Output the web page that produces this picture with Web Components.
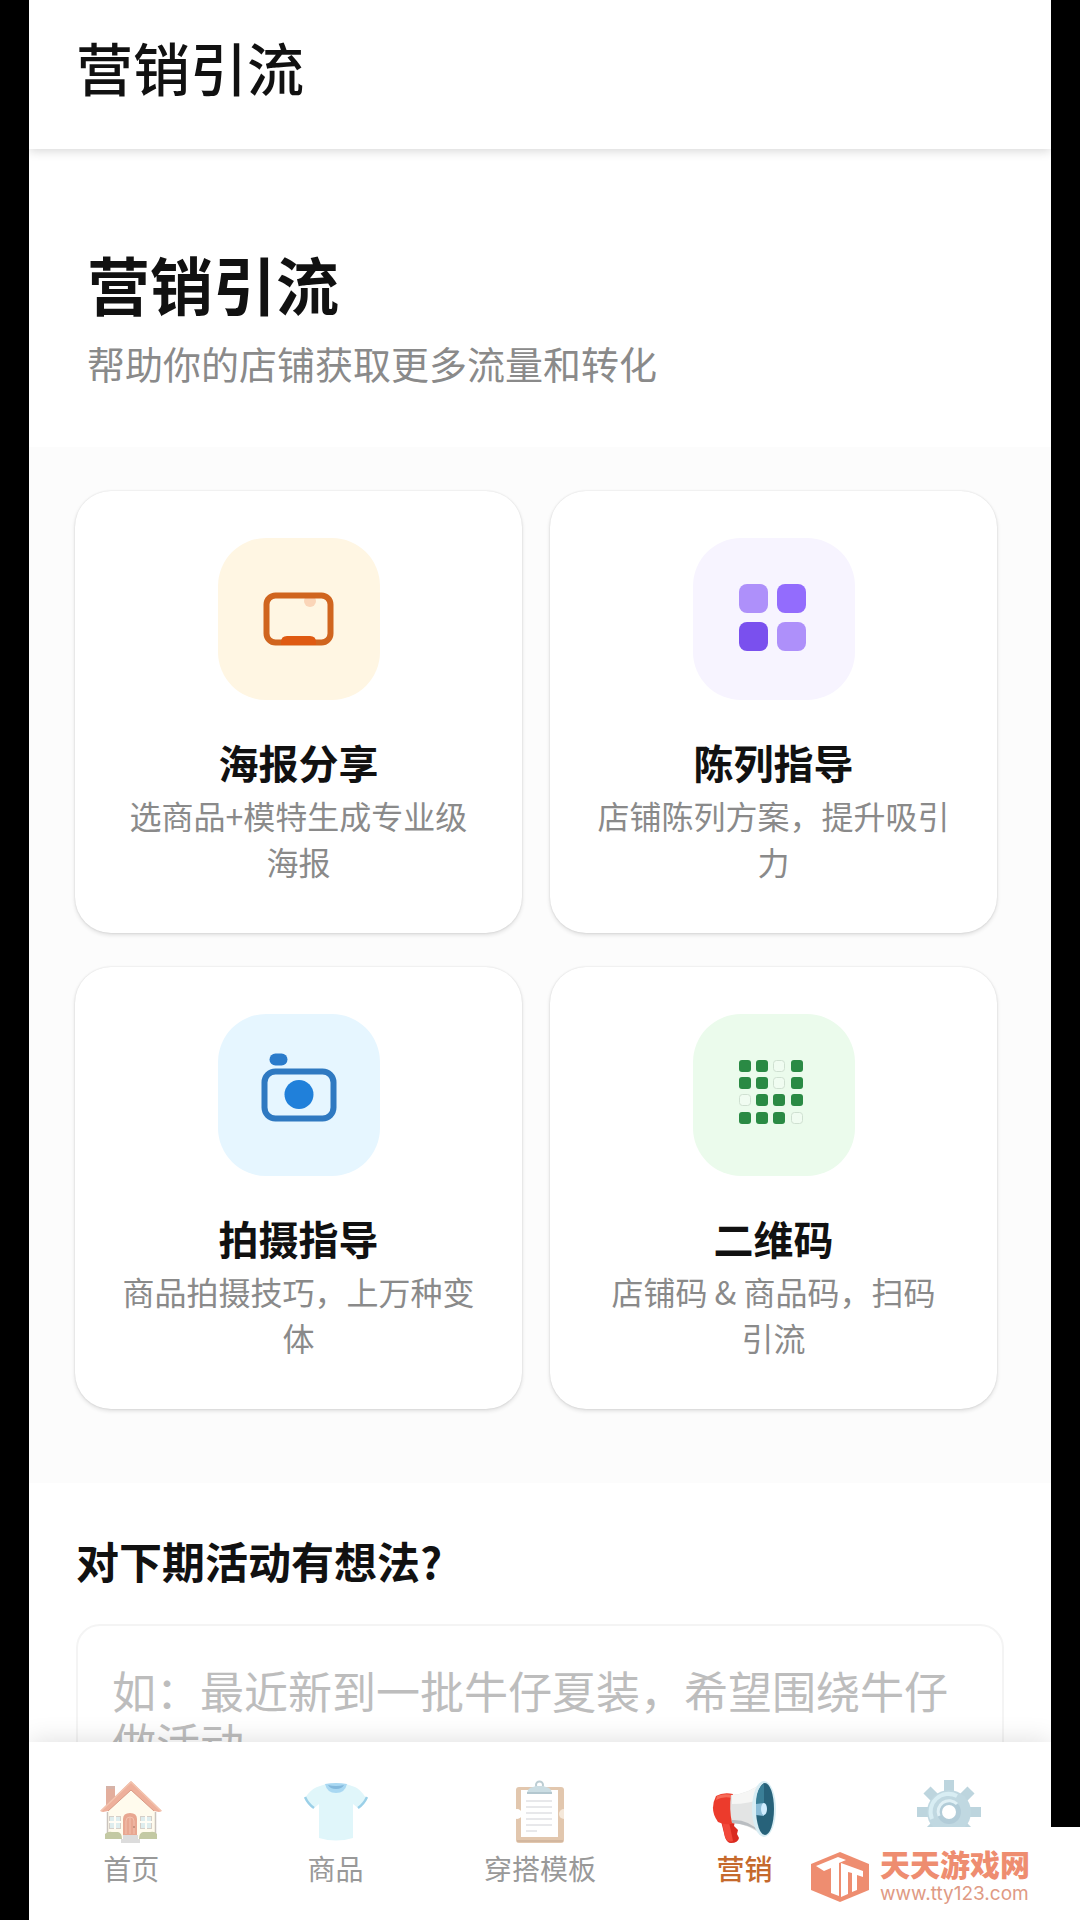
<!DOCTYPE html>
<html lang="zh-CN">
<head>
<meta charset="utf-8">
<meta name="viewport" content="width=device-width, initial-scale=1">
<title>营销引流</title>
<style>
    body {
        margin: 0;
        background: #000;
        font-family: "Noto Sans CJK SC", sans-serif;
        color: #111;
    }
</style>
</head>
<body>
<marketing-app>
    <app-header slot="header">营销引流</app-header>

    <page-hero>
        营销引流
        <span slot="subtitle">帮助你的店铺获取更多流量和转化</span>
    </page-hero>

    <feature-grid>
        <feature-card style="--tile: #fff6e3">
            <svg slot="icon" viewBox="0 0 162 162">
                <circle cx="92" cy="63" r="6" fill="#fbd5b8"/>
                <rect x="48.500" y="57.500" width="64" height="47" rx="9" fill="none" stroke="#d0651f" stroke-width="6"/>
                <path d="M63 107v-3q0-6 6-6h23q6 0 6 6v3z" fill="#df5a12"/>
            </svg>
            海报分享
            <span slot="text">选商品+模特生成专业级海报</span>
        </feature-card>
        <feature-card style="--tile: #f7f4ff">
            <svg slot="icon" viewBox="0 0 162 162">
                <rect x="46" y="46" width="29" height="29" rx="8" fill="#ae90fa"/>
                <rect x="84" y="46" width="29" height="29" rx="8" fill="#936cfd"/>
                <rect x="46" y="84" width="29" height="29" rx="8" fill="#7a50ee"/>
                <rect x="84" y="84" width="29" height="29" rx="8" fill="#ae90fa"/>
            </svg>
            陈列指导
            <span slot="text">店铺陈列方案，提升吸引力</span>
        </feature-card>
        <feature-card style="--tile: #e6f6ff">
            <svg slot="icon" viewBox="0 0 162 162">
                <rect x="51.500" y="39.500" width="18" height="12" rx="6" fill="#2a7bcb"/>
                <rect x="46.500" y="57.500" width="69" height="47" rx="11" fill="none" stroke="#2f79c1" stroke-width="6"/>
                <circle cx="81" cy="80.500" r="14.500" fill="#2080da"/>
            </svg>
            拍摄指导
            <span slot="text">商品拍摄技巧，上万种变体</span>
        </feature-card>
        <feature-card style="--tile: #ebfbec">
            <svg slot="icon" viewBox="0 0 162 162">
                <g fill="#2a8a44">
                    <rect x="46" y="46" width="12" height="12" rx="3"/>
                    <rect x="63" y="46" width="12" height="12" rx="3"/>
                    <rect x="98" y="46" width="12" height="12" rx="3"/>
                    <rect x="46" y="63" width="12" height="12" rx="3"/>
                    <rect x="63" y="63" width="12" height="12" rx="3"/>
                    <rect x="98" y="63" width="12" height="12" rx="3"/>
                    <rect x="63" y="80" width="12" height="12" rx="3"/>
                    <rect x="80" y="80" width="12" height="12" rx="3"/>
                    <rect x="98" y="80" width="12" height="12" rx="3"/>
                    <rect x="46" y="98" width="12" height="12" rx="3"/>
                    <rect x="63" y="98" width="12" height="12" rx="3"/>
                    <rect x="80" y="98" width="12" height="12" rx="3"/>
                </g>
                <g fill="#f0fcf1" stroke="#cfe0d1">
                    <rect x="80.500" y="46.500" width="11" height="11" rx="3"/>
                    <rect x="80.500" y="63.500" width="11" height="11" rx="3"/>
                    <rect x="46.500" y="80.500" width="11" height="11" rx="3"/>
                    <rect x="98.500" y="98.500" width="11" height="11" rx="3"/>
                </g>
            </svg>
            二维码
            <span slot="text">店铺码 &amp; 商品码，扫码引流</span>
        </feature-card>
    </feature-grid>

    <idea-form placeholder="如：最近新到一批牛仔夏装，希望围绕牛仔做活动">对下期活动有想法?</idea-form>

    <tab-bar slot="tabs">
        <tab-item>
            <svg slot="icon" viewBox="0 0 64 64">
                <path d="M7 6h9v14l-9 8z" fill="#e3ae9d"/>
                <path d="M7 6h9v3H7z" fill="#d6b3a8"/>
                <path d="M9 29L32 8l24 21v29H9z" fill="#fffbed"/>
                <path d="M8.500 32v26M56.500 32v26" stroke="#c9c3bd" stroke-width="1.500"/>
                <path d="M32 1L1 31l3 1 5-1 23-21 23 21 5 1 3-1z" fill="#eeb09b"/>
                <path d="M9 31l23-21 23 21" fill="none" stroke="#d99a86" stroke-width="1"/>
                <path d="M32 2L2 31M32 2l30 29" stroke="#f3c3ae" stroke-width="1.500"/>
                <path d="M24 55V39q0-6 7-6t7 6v16z" fill="#e8a791"/>
                <path d="M27 54V41q0-4 4-4t4 4v13M31 37v17" fill="none" stroke="#f2c1ae"/>
                <circle cx="35" cy="47" r="1" fill="#b98874"/>
                <g fill="#deedee" stroke="#d6cfc8">
                    <rect x="10.500" y="36.500" width="11" height="12"/>
                    <rect x="41.500" y="36.500" width="11" height="12"/>
                </g>
                <path d="M16 36v13M10 42h12M47 36v13M41 42h12" stroke="#fffdf6" stroke-width="2"/>
                <path d="M6 59v-5q3-3 7-2h6q4 1 4 7zM40 59q0-6 4-7h7q5-1 7 2v5z" fill="#c3c9a3"/>
                <path d="M24 55h15v4h2v4H22v-4h2z" fill="#dcdcdc"/>
            </svg>
            首页
        </tab-item>
        <tab-item>
            <svg slot="icon" viewBox="0 0 64 64">
                <path d="M22 4q10 5 20 0l9 3q6 3 11 11l-8 10-5-4v34q-17 5-34 0V24l-5 4-9-10Q6 10 13 7z" fill="#e0f6fa"/>
                <path d="M21 4q11-2 22 0-2 9-11 9T21 4z" fill="#a9d8f2"/>
                <path d="M24 5q8 2 16 0-2 4-8 4t-8-4z" fill="#84b9dc"/>
                <path d="M1 17q3 7 9 11M63 17q-3 7-9 11" fill="none" stroke="#9bd0e8" stroke-width="2.500"/>
            </svg>
            商品
        </tab-item>
        <tab-item>
            <svg slot="icon" viewBox="0 0 64 64">
                <rect x="8" y="7" width="48" height="56" rx="3" fill="#e2c7ae"/>
                <path d="M9 61h46" stroke="#d3b79f" stroke-width="2"/>
                <circle cx="9" cy="34" r="5" fill="#fff"/>
                <path d="M56 29a5 5 0 0 0 0 10z" fill="#f5e8da"/>
                <path d="M13 10h37v47H13z" fill="#fff"/>
                <path d="M18 21h26M18 27h26M18 33h26M18 39h26M18 45h26M18 51h11" stroke="#d0d1d6"/>
                <circle cx="31.500" cy="5" r="3.500" fill="#fff" stroke="#bccdd3" stroke-width="2"/>
                <path d="M19 14q0-6 6-7l3-1h7l3 1q6 1 6 7z" fill="#cbdde3"/>
                <path d="M19 13h25" stroke="#b3c7cf" stroke-width="2"/>
            </svg>
            穿搭模板
        </tab-item>
        <tab-item selected>
            <svg slot="icon" viewBox="0 0 64 64">
                <path d="M9 41h14l-1 5 4 4-1 4 2 4q-1 5-8 5-4 0-6-6z" fill="#d92a20"/>
                <path d="M10 42h7l4 19q-6 2-8-4z" fill="#f2483a"/>
                <path d="M4 16q7-4 17-2l2 29q-9 3-17-1-9-12-2-26z" fill="#ec3b2c"/>
                <path d="M5 16q7-3 15-1v3Q11 16 4 20z" fill="#f76b58"/>
                <path d="M19 15Q37 14 52 1v56Q38 44 20 43q-3-14-1-28z" fill="#e3e4e4"/>
                <path d="M20 15Q37 14 52 1v17q-15 6-32 6z" fill="#f6f6f5"/>
                <path d="M20 40q16-1 28 12-12-8-28-9z" fill="#b9bdc1"/>
                <ellipse cx="52" cy="29" rx="12" ry="28" fill="#d8edf4"/>
                <ellipse cx="53" cy="29" rx="9" ry="26" fill="#27627a"/>
                <path d="M52 4q-8 4-8 21h8z" fill="#3a7f97"/>
                <path d="M44 24l8-1v13l-8-1z" fill="#8bbdd8"/>
                <ellipse cx="52" cy="29" rx="3" ry="6" fill="#d1edff"/>
            </svg>
            营销
        </tab-item>
        <tab-item label="设置">
            <svg slot="icon" viewBox="0 0 64 64">
                <g stroke="#bdd5de" stroke-width="10">
                    <path d="M32 0v64M0 32h64"/>
                    <path d="M10 10l44 44M54 10L10 54"/>
                </g>
                <circle cx="32" cy="32" r="22" fill="#c0d8e1"/>
                <path d="M15 39a18 18 0 0 1 25-23" fill="none" stroke="#d8edf3" stroke-width="4"/>
                <circle cx="32" cy="32" r="12" fill="#b2ccd8"/>
                <path d="M22 36a11 11 0 0 1 18-12" fill="none" stroke="#e0f0f5" stroke-width="3"/>
                <circle cx="32" cy="32" r="7" fill="#fff"/>
            </svg>
        </tab-item>
    </tab-bar>
</marketing-app>

<site-mark>
    天天游戏网
    <span slot="url">www.tty123.com</span>
</site-mark>

<script>
function define(name, html, setup) {
    const template = document.createElement("template");
    template.innerHTML = html;

    customElements.define(name, class extends HTMLElement {
        constructor() {
            super();
            this.attachShadow({ mode: "open" });
            this.shadowRoot.appendChild(template.content.cloneNode(true));
            if (setup) {
                setup(this, this.shadowRoot);
            }
        }
    });
}

define("marketing-app", `
    <style>
        :host {
            display: flex;
            flex-direction: column;
            height: 100vh;
            margin: 0 29px;
            background: #fff;
        }

        main {
            flex: 1;
            min-height: 0;
            overflow-y: auto;
            scrollbar-width: none;
        }
    </style>
    <slot name="header"></slot>
    <main><slot></slot></main>
    <slot name="tabs"></slot>
`);

define("app-header", `
    <style>
        :host {
            display: block;
            z-index: 1;
            padding: 28px 47px 45px;
            background: #fff;
            box-shadow: 0 2px 10px rgba(0, 0, 0, 0.16);
            clip-path: inset(0 0 -20px);
        }

        h1 {
            margin: 0;
            font-size: 57px;
            font-weight: 500;
            line-height: 76px;
        }
    </style>
    <h1><slot></slot></h1>
`);

define("page-hero", `
    <style>
        :host {
            display: block;
            padding: 92px 58px 56px;
        }

        h2 {
            margin: 0 0 10px;
            font-size: 63px;
            font-weight: 700;
            line-height: 84px;
        }

        p {
            margin: 0;
            font-size: 38px;
            line-height: 56px;
            color: #8a8a8a;
        }
    </style>
    <h2><slot></slot></h2>
    <p><slot name="subtitle"></slot></p>
`);

define("feature-grid", `
    <style>
        :host {
            display: grid;
            grid-template-columns: 1fr 1fr;
            gap: 34px 28px;
            padding: 44px 54px 74px 46px;
            background: #fcfcfc;
        }
    </style>
    <slot></slot>
`);

define("feature-card", `
    <style>
        :host {
            display: flex;
            flex-direction: column;
            align-items: center;
            padding: 47px 47px 49px;
            border-radius: 36px;
            background: #fff;
            box-shadow: 0 0 2px rgba(0, 0, 0, 0.12), 0 2px 4px rgba(0, 0, 0, 0.12);
            text-align: center;
        }

        .tile {
            width: 162px;
            height: 162px;
            border-radius: 48px;
            background: var(--tile);
        }

        h3 {
            margin: 34px 0 2px;
            font-size: 40px;
            font-weight: 700;
            line-height: 56px;
        }

        p {
            margin: 0;
            font-size: 32px;
            line-height: 46px;
            color: #8a8a8a;
        }
    </style>
    <div class="tile"><slot name="icon"></slot></div>
    <h3><slot></slot></h3>
    <p><slot name="text"></slot></p>
`);

define("idea-form", `
    <style>
        :host {
            display: flex;
            flex-direction: column;
            gap: 34px;
            padding: 47px;
        }

        label {
            font-size: 43px;
            font-weight: 700;
            line-height: 60px;
        }

        textarea {
            box-sizing: border-box;
            width: 100%;
            height: 240px;
            padding: 38px 34px;
            border: 2px solid #f4f4f4;
            border-radius: 24px;
            outline: none;
            resize: none;
            overflow: hidden;
            background: #fff;
            color: inherit;
            font-family: inherit;
            font-size: 44px;
            line-height: 52px;
        }

        textarea::placeholder {
            color: #bdbdbd;
        }
    </style>
    <label for="idea"><slot></slot></label>
    <textarea id="idea"></textarea>
`, (host, root) => {
    root.querySelector("textarea").placeholder = host.getAttribute("placeholder");
});

define("tab-bar", `
    <style>
        :host {
            display: block;
            z-index: 1;
            background: #fff;
            box-shadow: 0 -2px 24px rgba(0, 0, 0, 0.12);
            clip-path: inset(-50px 0 0);
        }

        nav {
            display: grid;
            grid-template-columns: repeat(5, 1fr);
        }
    </style>
    <nav><slot></slot></nav>
`);

define("tab-item", `
    <style>
        :host {
            display: block;
        }

        button {
            display: flex;
            flex-direction: column;
            align-items: center;
            gap: 6px;
            width: 100%;
            min-height: 178px;
            padding: 38px 0 34px;
            border: 0;
            background: none;
            color: #999;
            font-family: inherit;
            font-size: 28px;
            line-height: 36px;
            cursor: pointer;
        }

        :host([selected]) button {
            color: #c5692c;
            font-weight: 500;
        }

        .icon {
            width: 64px;
            height: 64px;
        }
    </style>
    <button type="button">
        <span class="icon"><slot name="icon"></slot></span>
        <span><slot></slot></span>
    </button>
`, (host, root) => {
    if (host.hasAttribute("label")) {
        root.querySelector("button").setAttribute("aria-label", host.getAttribute("label"));
    }
});

// sits over the bottom right corner of the whole window
define("site-mark", `
    <style>
        :host {
            position: fixed;
            right: 0;
            bottom: 0;
            z-index: 2;
        }

        a {
            display: flex;
            align-items: center;
            gap: 10px;
            box-sizing: border-box;
            height: 93px;
            padding: 12px 50px 6px 20px;
            background: #fff;
            color: #ee8d70;
            text-decoration: none;
        }

        svg {
            width: 60px;
            height: 52px;
        }

        .name {
            display: block;
            font-family: "Liberation Sans", "Noto Sans CJK SC", sans-serif;
            font-size: 30px;
            font-weight: 900;
            line-height: 34px;
        }

        .url {
            display: block;
            font-family: Inter, sans-serif;
            font-size: 19px;
            line-height: 22px;
            color: #e09a84;
        }
    </style>
    <a href="#">
        <svg viewBox="0 0 60 52">
            <path d="M30 1l29 12v26L30 51 1 39V13z" fill="#ee8d70"/>
            <path d="M6 15l22-9 8 3-7 3v33l-8-3V17l-7 3z" fill="#fff"/>
            <path d="M31 12l22 8v6l-6-2v15l-5 2V22l-4-1v22l-7 3z" fill="#fff"/>
            <path d="M30 12v34" stroke="#ee8d70" stroke-width="2"/>
        </svg>
        <span>
            <span class="name"><slot></slot></span>
            <span class="url"><slot name="url"></slot></span>
        </span>
    </a>
`);
</script>
</body>
</html>
